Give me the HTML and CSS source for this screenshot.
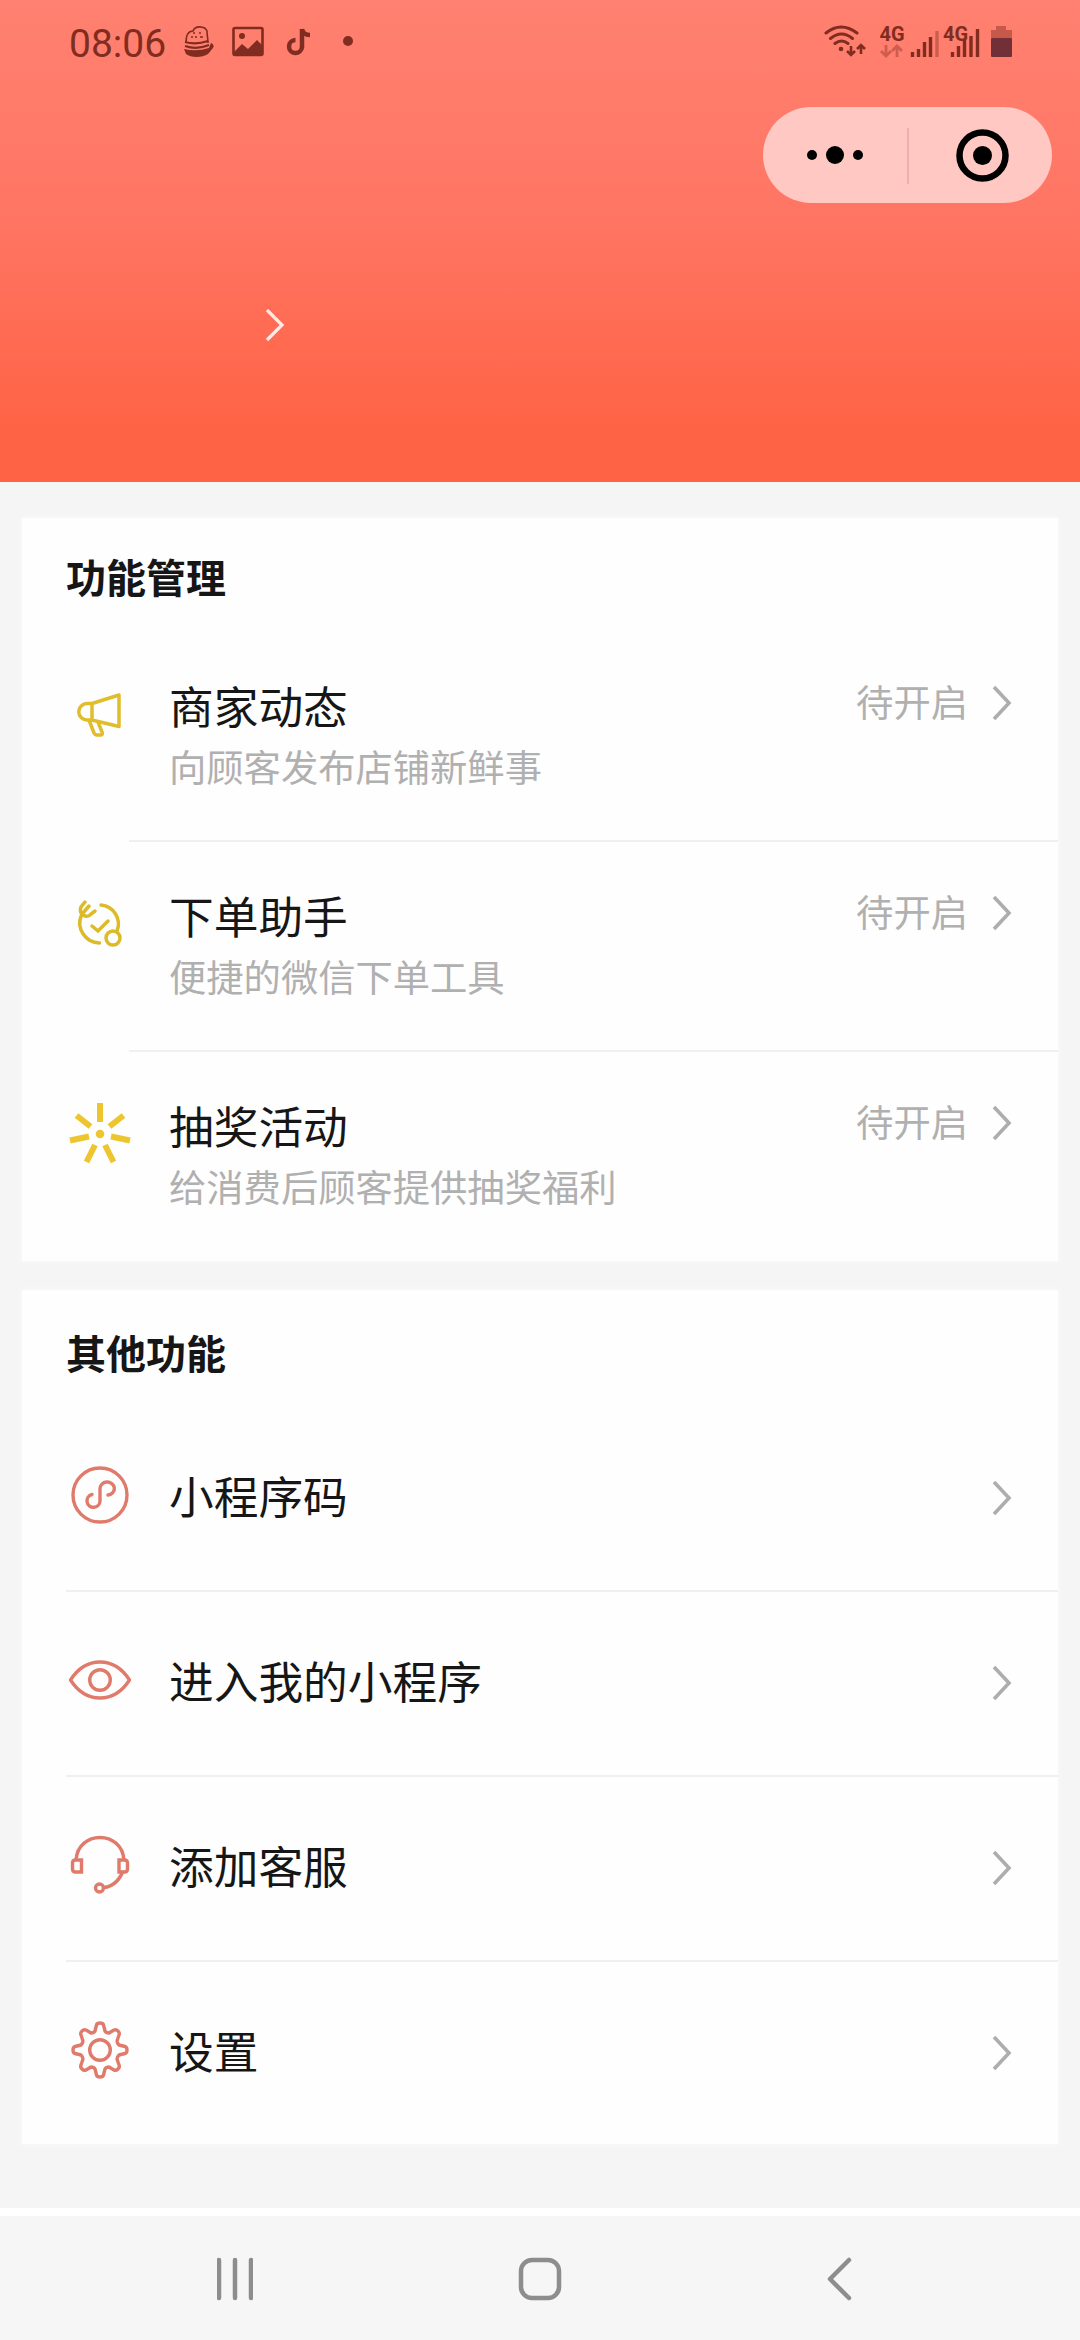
FILE: index.html
```
<!DOCTYPE html>
<html lang="zh-CN">
<head>
    <meta charset="UTF-8">
    <meta name="viewport" content="width=device-width, initial-scale=1.0">
    <title>我的</title>
    <link rel="stylesheet" href="styles.css">
</head>
<body>
    <header class="header">
        <div class="status-bar">
            <span class="time">08:06</span>
            <svg class="status-left" width="176" height="40" viewBox="180 20 176 40">
                <!-- basket -->
                <path d="M186 43c0-9 3-12 7-12 2-6 12-5 14 0 0 4 1 8 1 12" fill="none" stroke="#802c20" stroke-width="1.6"/>
                <path d="M191 37h2m2 0h2m3 0h3M193 33h2m4 0h2" stroke="#802c20" stroke-width="1.6"/>
                <path d="M185 42q11 3 23-1M185 46q12 4 24-1" fill="none" stroke="#802c20" stroke-width="2.2"/>
                <path d="M184 49q13 3 25-1l2-5q4 2 2 5c-2 2-3 4-5 6-6 4-17 4-22 0z" fill="#802c20"/>
                <!-- picture -->
                <rect x="233.500" y="28" width="29" height="27" rx="1.500" fill="none" stroke="#802c20" stroke-width="2.600"/>
                <circle cx="242" cy="36" r="3" fill="#802c20"/>
                <path d="M234 52l8-8 6 5 9-9 6 6v9h-29z" fill="#802c20"/>
                <!-- music note -->
                <path d="M302 29v18a6.500 6.500 0 1 1-6.500-7" fill="none" stroke="#802c20" stroke-width="4.500"/>
                <path d="M302 29q1 6 8 6" fill="none" stroke="#802c20" stroke-width="4.500"/>
                <circle cx="348" cy="41" r="5" fill="#802c20"/>
            </svg>
            <svg class="status-right" width="192" height="40" viewBox="822 20 192 40">
                <!-- wifi -->
                <g fill="none" stroke="#802c20" stroke-width="3" stroke-linecap="round">
                    <path d="M826 33q15-12 31 0M830.500 38.500q11-9 22 0M835 43.500q6.500-5 13 0"/>
                    <path d="M851 46v9m-4-4l4 4 4-4M861 54v-9m-4 4l4-4 4 4" stroke-width="2.600" stroke-linecap="butt"/>
                </g>
                <circle cx="841" cy="49" r="2.300" fill="#802c20"/>
                <text class="net" x="879.500" y="40.500">4G</text>
                <path d="M886 45v11m-5-5l5 5 5-5M897 57v-11m-5 5l5-5 5 5" fill="none" stroke="#802c20" stroke-opacity=".4" stroke-width="2.800"/>
                <path d="M912.500 57v-5M918.500 57v-8M924.500 57v-15M930.500 57v-20" stroke="#802c20" stroke-width="3.400"/>
                <path d="M937 57v-26" stroke="#802c20" stroke-opacity=".4" stroke-width="3.400"/>
                <text class="net" x="943" y="40.500">4G</text>
                <path d="M952.500 57v-5M958.500 57v-11M964.500 57v-17M971 57v-21M977.500 57v-28" stroke="#802c20" stroke-width="3.400"/>
                <!-- battery -->
                <path d="M996 26h10v4h6v8h-21v-8h5z" fill="#802c20" fill-opacity=".45"/>
                <rect x="991" y="38" width="21" height="19" rx="1" fill="#713038"/>
            </svg>
        </div>
        <div class="capsule">
            <svg width="289" height="96" viewBox="0 0 289 96">
                <circle cx="49" cy="48" r="5"/>
                <circle cx="72" cy="48" r="9"/>
                <circle cx="95" cy="48" r="5"/>
                <path d="M145 21v56" stroke="#e9a7a0" stroke-width="1.500"/>
                <circle cx="219.500" cy="48.500" r="23" fill="none" stroke="#000" stroke-width="6.500"/>
                <circle cx="219.500" cy="48.500" r="9.500"/>
            </svg>
        </div>
        <div class="profile">
            <svg width="22" height="36" viewBox="0 0 22 36"><path d="M3 3l15 15L3 33" fill="none" stroke="#ffe9e5" stroke-width="3.200"/></svg>
        </div>
    </header>

    <main class="content">
        <section class="card card-manage">
            <h2>功能管理</h2>
            <div class="feature">
                <svg class="icon" width="64" height="64" viewBox="0 0 64 64">
                    <g fill="none" stroke="#e0bd2c" stroke-width="3.500" stroke-linejoin="round">
                        <path d="M24 22.500L51 14v31.500L24 39M24 22.500h-5a8.200 8.200 0 0 0 0 16.500h5zM21 39l5 13q1 2 3 2h4q2 0 1-3l-4-10"/>
                    </g>
                </svg>
                <div class="info">
                    <h3>商家动态</h3>
                    <p>向顾客发布店铺新鲜事</p>
                </div>
                <div class="state">
                    <span>待开启</span>
                    <svg class="arrow" viewBox="0 0 20 36"><path d="M2 2l15 16L2 34"/></svg>
                </div>
            </div>
            <div class="feature">
                <svg class="icon" width="64" height="64" viewBox="0 0 64 64">
                    <g fill="none" stroke="#dcba28" stroke-width="3.500" stroke-linecap="round">
                        <path d="M33 14a19 19 0 0 1 16 26M13.500 24a20 20 0 0 0 18 28"/>
                        <path d="M17 11l-4 5q-2 5 2 8 5 3 8-1l4-3M21 15l-6 7"/>
                        <path d="M24 35l6 5 10-10"/>
                        <circle cx="45" cy="47" r="7"/>
                    </g>
                </svg>
                <div class="info">
                    <h3>下单助手</h3>
                    <p>便捷的微信下单工具</p>
                </div>
                <div class="state">
                    <span>待开启</span>
                    <svg class="arrow" viewBox="0 0 20 36"><path d="M2 2l15 16L2 34"/></svg>
                </div>
            </div>
            <div class="feature">
                <svg class="icon" width="64" height="64" viewBox="0 0 64 64">
                    <path d="M32 2v19M8.500 14.500l14 11M55.500 14.500l-14 11M2 39.500l19-4M62 39.500l-19-4M18.500 61l8.500-17M45.500 61l-8.500-17" stroke="#edc62f" stroke-width="6"/>
                    <circle cx="32" cy="33" r="4.300" fill="#edc62f"/>
                </svg>
                <div class="info">
                    <h3>抽奖活动</h3>
                    <p>给消费后顾客提供抽奖福利</p>
                </div>
                <div class="state">
                    <span>待开启</span>
                    <svg class="arrow" viewBox="0 0 20 36"><path d="M2 2l15 16L2 34"/></svg>
                </div>
            </div>
        </section>

        <section class="card card-other">
            <h2>其他功能</h2>
            <div class="item">
                <svg class="icon red" width="64" height="64" viewBox="0 0 64 64">
                    <circle cx="32" cy="32" r="27"/>
                    <path d="M24 31.500a6.500 6.500 0 1 0 8 6.500V26a7.200 6.500 0 1 1 8 6" stroke-linecap="round"/>
                </svg>
                <span class="label">小程序码</span>
                <svg class="arrow" viewBox="0 0 20 36"><path d="M2 2l15 16L2 34"/></svg>
            </div>
            <div class="item">
                <svg class="icon red" width="64" height="64" viewBox="0 0 64 64">
                    <path d="M2.500 32C18 8 46 8 61.500 32 46 56 18 56 2.500 32z" stroke-linejoin="round"/>
                    <circle cx="32" cy="32" r="10.300"/>
                </svg>
                <span class="label">进入我的小程序</span>
                <svg class="arrow" viewBox="0 0 20 36"><path d="M2 2l15 16L2 34"/></svg>
            </div>
            <div class="item">
                <svg class="icon red" width="64" height="64" viewBox="0 0 64 64">
                    <path d="M8 27C10 -3 54 -3 56 27M55 38Q49 53 36 54.500"/>
                    <path d="M7.500 27h6v12h-6q-3 0-3-3v-6q0-3 3-3zM51 27h5.500q3 0 3 3v6q0 3-3 3H51z"/>
                    <circle cx="31.500" cy="55" r="4"/>
                </svg>
                <span class="label">添加客服</span>
                <svg class="arrow" viewBox="0 0 20 36"><path d="M2 2l15 16L2 34"/></svg>
            </div>
            <div class="item">
                <svg class="icon red" width="64" height="64" viewBox="0 0 64 64">
                    <path stroke-linejoin="round" d="M28.500 7q.5-2 3.500-2t3.500 2l1.500 6q1 2 4 2l5-3q2-1 4 1t1 4l-2 6q0 2 2 4l6 1.500q2 .5 2 3.500t-2 3.500l-6 1.500q-2 2-2 4l2 6q1 2-1 4t-4 1l-5-3q-3 0-4 2l-1.500 6q-.5 2-3.500 2t-3.500-2l-1.500-6q-1-2-4-2l-5 3q-2 1-4-1t-1-4l2-6q0-2-2-4L7 35.500q-2-.5-2-3.500t2-3.500l6-1.500q2-2 2-4l-2-6q-1-2 1-4t4-1l5 3q3 0 4-2z"/>
                    <circle cx="32" cy="32" r="10.300"/>
                </svg>
                <span class="label">设置</span>
                <svg class="arrow" viewBox="0 0 20 36"><path d="M2 2l15 16L2 34"/></svg>
            </div>
        </section>
    </main>

    <nav class="nav-bar">
        <svg width="36" height="44" viewBox="0 0 36 44"><path d="M2 3v38M18 3v38M34 3v38"/></svg>
        <svg width="44" height="44" viewBox="0 0 44 44"><rect x="3" y="3" width="38" height="38" rx="11"/></svg>
        <svg width="26" height="44" viewBox="0 0 26 44"><path d="M23 3L4 22l19 19"/></svg>
    </nav>
</body>
</html>
```
FILE: styles.css
```
* {
    box-sizing: border-box;
}

body {
    width: 1080px;
    height: 2340px;
    margin: 0;
    display: flex;
    flex-direction: column;
    overflow: hidden;
    font-family: "Noto Sans CJK SC", sans-serif;
    background-color: #f6f5f5;
    color: #161616;
}

h2, h3, p {
    margin: 0;
    font-weight: normal;
}

svg {
    display: block;
    flex-shrink: 0;
}

.header {
    height: 482px;
    display: flex;
    flex-direction: column;
    background: linear-gradient(#ff8171, #ff7563 45%, #ff6345 90%);
}

.status-bar {
    height: 107px;
    padding: 20px 66px 0 69px;
    display: flex;
    align-items: flex-start;
}

.time {
    width: 111px;
    font-family: Roboto, sans-serif;
    font-size: 39px;
    line-height: 48px;
    color: #802c20;
}

.status-right {
    margin-left: auto;
}

.net {
    font-family: Roboto, sans-serif;
    font-size: 20px;
    font-weight: bold;
    fill: #802c20;
}

.capsule {
    align-self: flex-end;
    margin-right: 28px;
    border-radius: 48px;
    background-color: #ffc8c3;
}

.profile {
    padding: 104px 0 0 264px;
}

.content {
    flex: 1;
    padding: 36px 22px 0;
}

.card {
    background-color: #fefefe;
    box-shadow: 0 0 6px #fbfbfa;
}

.card-manage {
    height: 743px;
    padding-top: 28px;
    margin-bottom: 29px;
}

.card-other {
    height: 854px;
    padding-top: 32px;
}

.card h2 {
    height: 60px;
    padding-left: 44px;
    font-size: 40px;
    line-height: 60px;
    font-weight: bold;
}

.feature {
    height: 210px;
    padding: 43px 46px 0 46px;
    display: flex;
    align-items: flex-start;
    background: linear-gradient(#f0f0f0, #f0f0f0) 107px 100% / 100% 2px no-repeat;
}

.card-manage h2 {
    margin-bottom: 26px;
}

.feature:last-child,
.item:last-child {
    background: none;
}

.feature .icon {
    margin-top: 6px;
}

.info {
    margin-left: 37px;
}

.info h3 {
    font-size: 44.7px;
    line-height: 60px;
}

.info p {
    font-size: 37.3px;
    line-height: 62px;
    color: #b0b0b0;
}

.state {
    margin-left: auto;
    height: 56px;
    display: flex;
    align-items: center;
    gap: 24px;
    font-size: 37.3px;
    color: #b0b0b0;
}

.state span {
    margin-bottom: 4px;
}

.arrow {
    width: 20px;
    height: 36px;
    fill: none;
    stroke: #adadad;
    stroke-width: 3.6;
}

.card-other h2 {
    margin-bottom: 25px;
}

.item {
    height: 185px;
    padding: 0 46px;
    display: flex;
    align-items: center;
    background: linear-gradient(#f0f0f0, #f0f0f0) 44px 100% / 100% 2px no-repeat;
}

.item .icon {
    margin-bottom: 9px;
}

.item .arrow {
    margin: 0 0 3px auto;
}

.label {
    margin: 0 0 9px 37px;
    font-size: 44.7px;
    line-height: 60px;
}

.red {
    fill: none;
    stroke: #e07b6c;
    stroke-width: 3.4;
}

.nav-bar {
    height: 132px;
    padding: 41px 228px 0 217px;
    display: flex;
    align-items: flex-start;
    justify-content: space-between;
    border-top: 8px solid #fff;
    background-color: #f6f6f6;
    background-clip: padding-box;
}

.nav-bar svg {
    fill: none;
    stroke: #8d8d8d;
    stroke-width: 4.5;
    stroke-linecap: round;
    stroke-linejoin: round;
}
```
